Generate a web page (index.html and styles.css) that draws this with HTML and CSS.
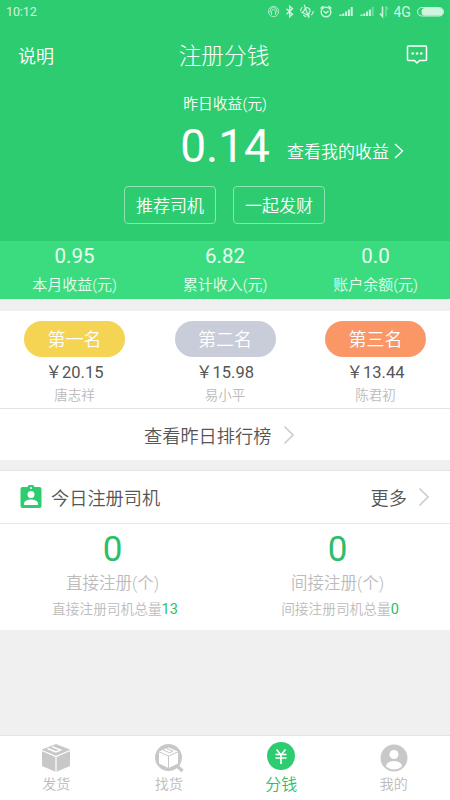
FILE: index.html
```html
<!DOCTYPE html>
<html lang="zh-CN">
<head>
<meta charset="utf-8">
<meta name="viewport" content="width=device-width, initial-scale=1">
<title>注册分钱</title>
<link rel="stylesheet" href="styles.css">
</head>
<body>
<header class="hero">
  <div class="status">
    <span class="clock">10:12</span>
    <svg class="status-icons" width="180" height="24" viewBox="0 0 180 24" fill="none" stroke="currentColor" stroke-width="1">
      <g opacity=".75"><circle cx="7.500" cy="11.500" r="5.200"/><path d="M5.500 15v-3.500a2 2 0 0 1 4 0V15M4 13v-2a3.500 3.500 0 0 1 7 0v2"/></g>
      <path stroke-width="1.400" d="M20.500 8.700l6 5.600-2.800 2.500V6.200l2.800 2.500-6 5.600"/>
      <path d="M37 14.500h7.500l-1-1.500v-3a2.800 2.800 0 0 0-5.500 0v3zM39 16.500h3.500M35.500 6.500l10 10M35 9.500q-1 2 0 4.500M46.500 8.500q1 2 0 4.500" stroke-width="1.200" transform="rotate(25 41 11.500)"/>
      <circle cx="60" cy="12" r="4.800" stroke-width="1.400"/><path stroke-width="1.400" d="M54.500 8.500l3-2.500M65.500 8.500L62.500 6M57.500 11l2.500 2 2.500-2"/>
      <path stroke-width="2" d="M74.500 16v-1.500M77.300 16v-2.500M80.100 16v-4.500M82.900 16v-6.500M85.700 16V7"/>
      <path stroke-width="2" d="M95.500 16v-1.500M98.300 16v-2.500M101.100 16v-4.500M103.900 16v-6.500"/><path opacity=".4" stroke-width="2" d="M106.700 16V7"/>
      <path stroke-width="1.500" d="M116.500 6.500v10l-2.500-3"/><path opacity=".6" d="M120 16.500v-10l2 3"/>
      <text class="network" x="127.500" y="16.500">4G</text>
      <rect x="151.500" y="7.500" width="26" height="8.500" rx="4.250"/><rect x="155.500" y="8" width="21.500" height="7.500" rx="3.500" fill="currentColor" stroke="none"/>
    </svg>
  </div>
  <div class="titlebar">
    <a class="help">说明</a>
    <h1>注册分钱</h1>
    <svg class="message" width="22" height="22" viewBox="0 0 22 22" fill="none" stroke="currentColor" stroke-width="1.500" stroke-linejoin="round"><path d="M2.500 1h17q1 0 1 1v12.500q0 1-1 1h-6L11 18l-2.500-2.500h-6q-1 0-1-1V2q0-1 1-1z"/><path stroke-width="2" d="M5.500 8.500h2.500M9.800 8.500h2.500M14 8.500h2.500"/></svg>
  </div>
  <div class="hero-label">昨日收益(元)</div>
  <div class="earn">
    <span></span>
    <strong>0.14</strong>
    <a class="earn-link">查看我的收益<svg width="10" height="18" viewBox="0 0 10 18" fill="none" stroke="currentColor" stroke-width="1.300"><path d="M1 1L8.500 8 1 15"/></svg></a>
  </div>
  <div class="actions"><button>推荐司机</button><button>一起发财</button></div>
</header>

<section class="stats thirds">
  <div><b>0.95</b><span>本月收益(元)</span></div>
  <div><b>6.82</b><span>累计收入(元)</span></div>
  <div><b>0.0</b><span>账户余额(元)</span></div>
</section>

<section class="card ranking">
  <div class="thirds podium">
    <div><span class="pill gold">第一名</span><b>￥20.15</b><small>唐志祥</small></div>
    <div><span class="pill silver">第二名</span><b>￥15.98</b><small>易小平</small></div>
    <div><span class="pill bronze">第三名</span><b>￥13.44</b><small>陈君初</small></div>
  </div>
  <a class="rank-link">查看昨日排行榜<svg class="chevron" width="12" height="20" viewBox="0 0 12 20"><path d="M1.500 1.500L10 10l-8.500 8.500"/></svg></a>
</section>

<section class="card drivers">
  <div class="drivers-head">
    <svg width="22" height="24" viewBox="0 0 22 24"><path fill="#2ecc71" d="M2.500 2h5a3.700 3.700 0 0 1 7 0h5q2 0 2 2v17q0 2-2 2h-17q-2 0-2-2V4q0-2 2-2z"/><circle cx="11" cy="3" r="1" fill="#fff"/><circle cx="11" cy="9.500" r="3.500" fill="#fff"/><path fill="#fff" d="M4 20v-1.500c0-2.700 4.500-4 7-4s7 1.300 7 4V20z"/></svg>
    <h2>今日注册司机</h2>
    <a>更多</a>
    <svg class="chevron" width="12" height="20" viewBox="0 0 12 20"><path d="M1.500 1.500L10 10l-8.500 8.500"/></svg>
  </div>
  <div class="counts">
    <div><b>0</b><span>直接注册(个)</span><small>直接注册司机总量<em>13</em></small></div>
    <div><b>0</b><span>间接注册(个)</span><small>间接注册司机总量<em>0</em></small></div>
  </div>
</section>

<nav class="tabs">
  <a><svg width="30" height="30" viewBox="0 0 30 30"><path fill="#c8c8c8" d="M15 1l14 5.500v16.500l-14 6-14-6V6.500z"/><path fill="none" stroke="#fff" stroke-width="1.200" d="M1 7.500l14 6 14-6M15 13.500V29"/><path fill="none" stroke="#fff" stroke-width="1.400" d="M6.500 5.500l8.500 3.500 4.500-1.900L11 3.700"/></svg><span>发货</span></a>
  <a><svg width="30" height="30" viewBox="0 0 30 30"><path stroke="#c8c8c8" stroke-width="3.500" d="M23 23l5.500 5"/><circle cx="14.500" cy="14.500" r="13.500" fill="#c8c8c8"/><path fill="#fff" d="M14.500 4.500l9.500 4v12l-9.500 4.500-9.500-4.500v-12z"/><path fill="none" stroke="#c8c8c8" stroke-width="1" d="M5 8.800l9.500 4.200 9.500-4.200M14.500 13v12M9 7l6.500 2.800 3.500-1.500-6.500-2.800"/></svg><span>找货</span></a>
  <a class="active"><svg width="30" height="30" viewBox="0 0 30 30"><circle cx="15" cy="15" r="14" fill="#2ecc71"/><path fill="none" stroke="#fff" stroke-width="1.700" d="M10.500 8.500l4.500 5.500 4.500-5.500M9.500 13.500h11M9.500 17h11M15 13.500V23"/></svg><span>分钱</span></a>
  <a><svg width="30" height="30" viewBox="0 0 30 30"><circle cx="15" cy="15" r="13.500" fill="#c8c8c8"/><circle cx="15" cy="11.500" r="4.500" fill="#fff"/><path fill="#fff" d="M7 23.500c0-3.500 4-5.500 8-5.500s8 2 8 5.500q-3.500 3-8 3t-8-3z"/></svg><span>我的</span></a>
</nav>
</body>
</html>
```
FILE: styles.css
```css
* { box-sizing: border-box; }
body {
  margin: 0;
  width: 450px;
  height: 800px;
  display: flex;
  flex-direction: column;
  overflow: hidden;
  background: #f0f0f0;
  color: #555;
  font-family: Roboto, "Noto Sans CJK SC", sans-serif;
  font-weight: 350;
}
h1, h2, b, strong, em, small { font-weight: inherit; font-style: normal; margin: 0; }
svg { flex: none; }

.hero { height: 241px; background: #2ecc71; color: #fff; }
.status { height: 24px; display: flex; justify-content: space-between; padding: 0 4px 0 6px; color: #d0f5df; }
.clock { font-size: 12.500px; line-height: 24px; font-weight: 400; letter-spacing: -.1px; }
.network { font-size: 14px; font-weight: 400; fill: currentColor; stroke: none; }
.titlebar { height: 64px; display: grid; grid-template-columns: 1fr auto 1fr; align-items: center; padding: 0 22px 0 18px; }
.help { font-size: 18px; line-height: 26px; padding-top: 1px; }
.titlebar h1 { font-size: 22.700px; line-height: 32px; padding: 2px 0 0 2px; font-weight: 300; }
.message { justify-self: end; }
.hero-label { height: 32px; line-height: 33px; text-align: center; font-size: 14.800px; }
.earn { height: 52px; display: grid; grid-template-columns: 1fr 90px 1fr; }
.earn strong { font-size: 46px; line-height: 52px; text-align: center; font-weight: 400; }
.earn-link { display: flex; align-items: center; gap: 5px; padding: 12px 0 0 17px; font-size: 17px; line-height: 40px; }
.actions { display: flex; justify-content: center; gap: 17px; padding: 14px 1px 0 0; }
.actions button { width: 92px; height: 38px; padding: 0 0 1px; background: none; border: 1px solid #8ee3b2; border-radius: 4px; color: #fff; font: inherit; font-size: 17px; }

.thirds { display: grid; grid-template-columns: 149px 152px 149px; text-align: center; }
.stats { height: 58px; background: #3bdc80; color: #e8fcf0; }
.stats b, .stats span { display: block; }
.stats b { font-size: 20.500px; line-height: 31px; font-weight: 400; }
.stats span { font-size: 15px; line-height: 27px; }

.card { background: #fff; }
.ranking { margin-top: 12px; height: 149px; }
.podium { height: 98px; padding-top: 10px; border-bottom: 1px solid #e4e4e4; }
.podium > div { display: flex; flex-direction: column; align-items: center; }
.pill { width: 101px; height: 36px; border-radius: 18px; color: #fff; font-size: 18px; line-height: 38px; }
.gold { background: #f4d452; }
.silver { background: #c8cdd9; }
.bronze { background: #fb9767; }
.podium b { font-size: 16.500px; line-height: 31px; height: 28px; font-weight: 400; }
.podium small { font-size: 13.500px; line-height: 21px; color: #bbb; }
.rank-link { display: flex; height: 52px; align-items: center; gap: 12px; padding-left: 144px; font-size: 18.200px; }
.chevron { fill: none; stroke: #ccc; stroke-width: 1.600; }

.drivers { margin-top: 10px; height: 160px; border-top: 1px solid #e4e4e4; }
.drivers-head { height: 53px; display: flex; align-items: center; padding: 0 20px 0 20px; border-bottom: 1px solid #e8e8e8; font-size: 18.200px; }
.drivers-head h2 { flex: 1; margin-left: 9px; font-size: inherit; }
.drivers-head .chevron { margin-left: 11px; }
.counts { display: grid; grid-template-columns: 1fr 1fr; text-align: center; }
.counts > div > * { display: block; color: #bbb; }
.counts > div > b { font-size: 35px; line-height: 52px; color: #2ebd6b; font-weight: 400; }
.counts > div > span { font-size: 16.500px; line-height: 16px; }
.counts > div > small { font-size: 13.700px; line-height: 35px; padding-left: 5px; }
.counts em { color: #2ebd6b; font-size: 14.500px; font-weight: 400; }

.tabs { margin-top: auto; height: 65px; display: grid; grid-template-columns: repeat(4, 1fr); background: #fff; border-top: 1px solid #e4e4e4; }
.tabs a { display: flex; flex-direction: column; align-items: center; padding-top: 7px; font-size: 14px; color: #bbb; }
.tabs span { line-height: 23px; }
.tabs .active { padding-top: 5px; font-size: 16px; color: #2ebd6b; }
.tabs .active span { line-height: 28px; }
```
